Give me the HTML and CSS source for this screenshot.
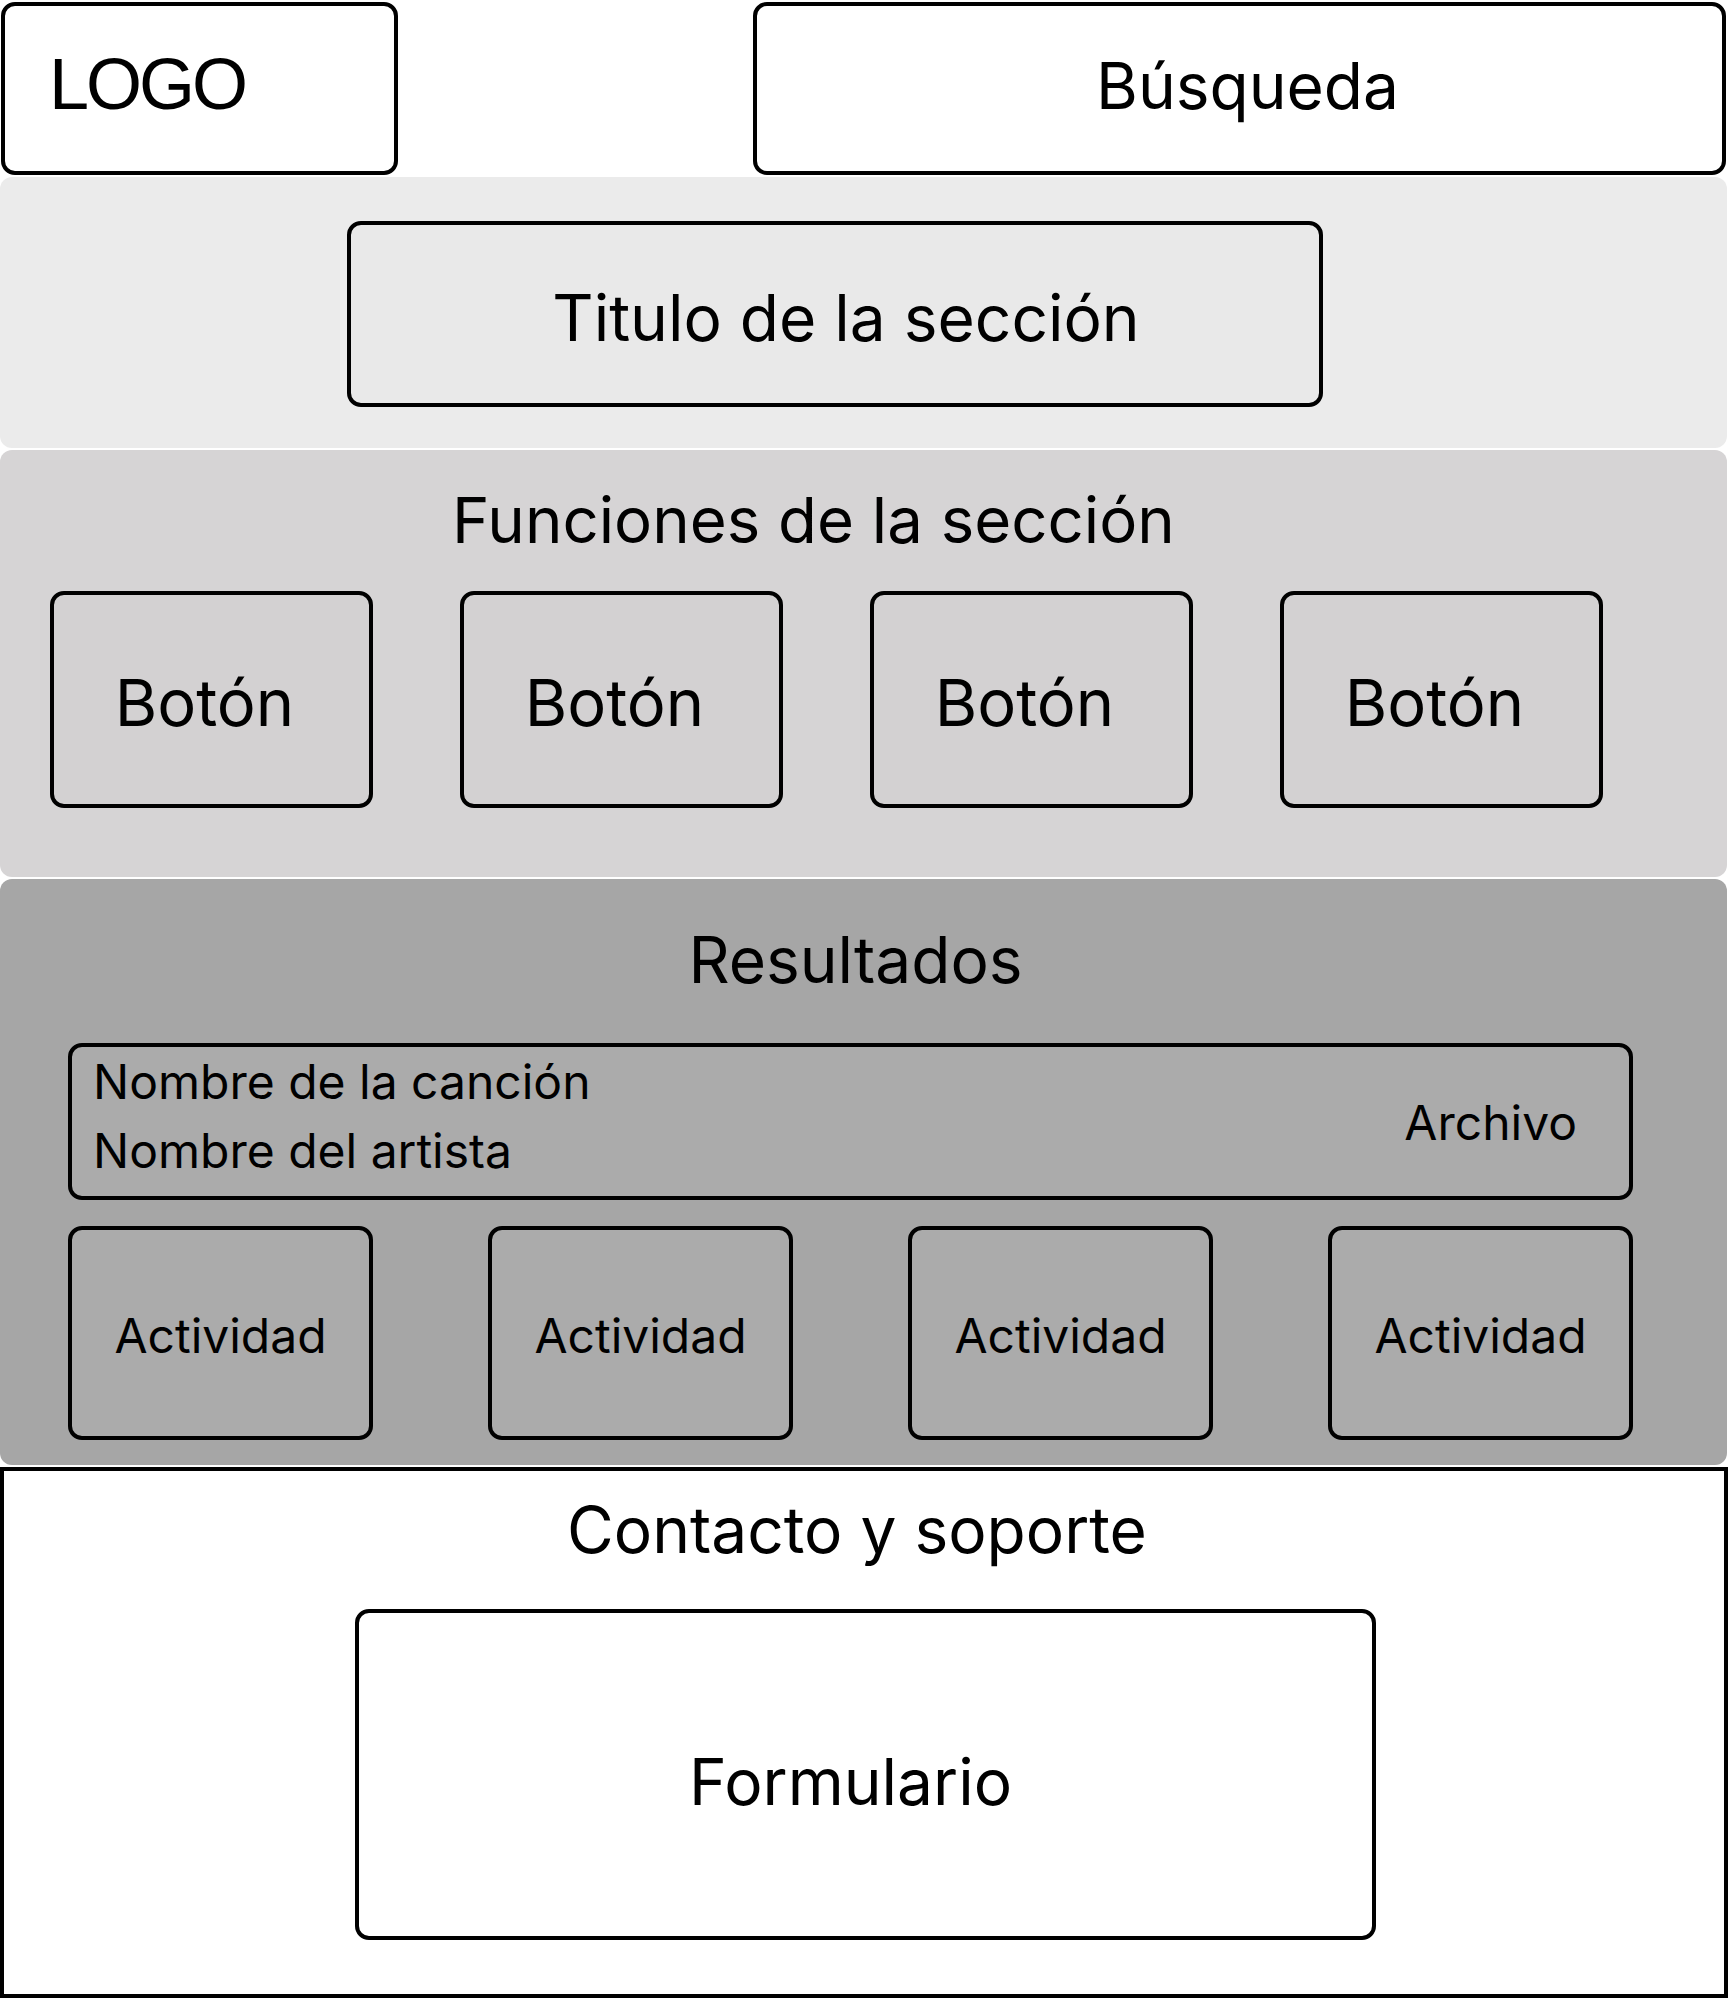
FILE: index.html
```html
<!DOCTYPE html>
<html lang="es">
<head>
<meta charset="utf-8">
<title>Wireframe</title>
<link rel="stylesheet" href="styles.css">
</head>
<body>
<header class="top">
  <div class="logo">LOGO</div>
  <div class="search">Búsqueda</div>
</header>
<section class="panel title-panel">
  <div class="title-box">Titulo de la sección</div>
</section>
<section class="panel functions">
  <h2 class="heading functions-heading">Funciones de la sección</h2>
  <div class="buttons">
    <div class="btn">Botón</div>
    <div class="btn">Botón</div>
    <div class="btn">Botón</div>
    <div class="btn">Botón</div>
  </div>
</section>
<section class="panel results">
  <h2 class="heading results-heading">Resultados</h2>
  <div class="result-row">
    <div class="song">
      <div>Nombre de la canción</div>
      <div>Nombre del artista</div>
    </div>
    <div class="file">Archivo</div>
  </div>
  <div class="activities">
    <div class="activity">Actividad</div>
    <div class="activity">Actividad</div>
    <div class="activity">Actividad</div>
    <div class="activity">Actividad</div>
  </div>
</section>
<footer class="contact">
  <h2 class="heading contact-heading">Contacto y soporte</h2>
  <div class="form-box">Formulario</div>
</footer>
</body>
</html>
```
FILE: styles.css
```css
* { box-sizing: border-box; }
html, body { margin: 0; padding: 0; background: #ffffff; }
body {
  width: 1728px;
  font-family: Inter, "Noto Sans", sans-serif;
  color: #000;
}
.top {
  display: flex;
  justify-content: space-between;
  padding: 2px 2px 0 1px;
  height: 177px;
}
.logo {
  width: 397px;
  height: 173px;
  border: 4px solid #000;
  border-radius: 14px;
  display: flex;
  align-items: center;
  padding: 0 0 10px 44px;
  font-family: "Liberation Sans", Arial, sans-serif;
  font-size: 72px;
  letter-spacing: -3px;
  line-height: 1;
}
.search {
  width: 973px;
  height: 173px;
  border: 4px solid #000;
  border-radius: 14px;
  display: flex;
  align-items: center;
  justify-content: center;
  padding: 0 0 5px 16px;
  font-size: 64px;
  line-height: 1;
}
.panel {
  width: 1727px;
  border-radius: 12px;
  margin-bottom: 2px;
}
.title-panel {
  background: #ebebeb;
  height: 271px;
  padding: 44px 0 0 347px;
}
.title-box {
  width: 976px;
  height: 186px;
  border: 4px solid #000;
  border-radius: 14px;
  background: #e9e9e9;
  display: flex;
  align-items: center;
  justify-content: center;
  padding: 8px 0 0 22px;
  font-size: 64px;
  line-height: 1;
}
.heading {
  margin: 0;
  font-weight: 400;
  font-size: 64px;
  line-height: 64px;
}
.functions {
  background: #d6d4d5;
  height: 427px;
  padding-top: 38px;
}
.functions-heading {
  padding-left: 452px;
  font-size: 63.5px;
}
.buttons {
  display: flex;
  gap: 87px;
  padding-left: 50px;
  margin-top: 39px;
}
.btn {
  width: 323px;
  height: 217px;
  border: 4px solid #000;
  border-radius: 14px;
  background: #d3d1d2;
  display: flex;
  align-items: center;
  justify-content: center;
  padding: 5px 14px 0 0;
  font-size: 65px;
  line-height: 1;
}
.results {
  background: #a6a6a6;
  height: 586px;
  padding: 49px 94px 0 68px;
}
.results-heading {
  text-align: center;
  padding-left: 10px;
}
.result-row {
  margin-top: 51px;
  height: 157px;
  border: 4px solid #000;
  border-radius: 14px;
  background: #ababab;
  display: flex;
  justify-content: space-between;
  align-items: center;
  padding: 0 52px 0 21px;
  font-size: 48px;
}
.song {
  line-height: 69px;
  padding-bottom: 11px;
}
.file {
  line-height: 1;
  padding-top: 2px;
}
.activities {
  display: flex;
  justify-content: space-between;
  margin-top: 26px;
}
.activity {
  width: 305px;
  height: 214px;
  border: 4px solid #000;
  border-radius: 14px;
  background: #ababab;
  display: flex;
  align-items: center;
  justify-content: center;
  padding-top: 5px;
  font-size: 48px;
  line-height: 1;
}
.contact {
  margin-top: 2px;
  height: 531px;
  border: 4px solid #000;
  background: #fff;
  padding-top: 27px;
}
.contact-heading {
  text-align: center;
  padding-right: 14px;
}
.form-box {
  margin: 47px 0 0 351px;
  width: 1021px;
  height: 331px;
  border: 4px solid #000;
  border-radius: 14px;
  display: flex;
  align-items: center;
  justify-content: center;
  padding: 14px 30px 0 0;
  font-size: 64px;
  line-height: 1;
}
```
